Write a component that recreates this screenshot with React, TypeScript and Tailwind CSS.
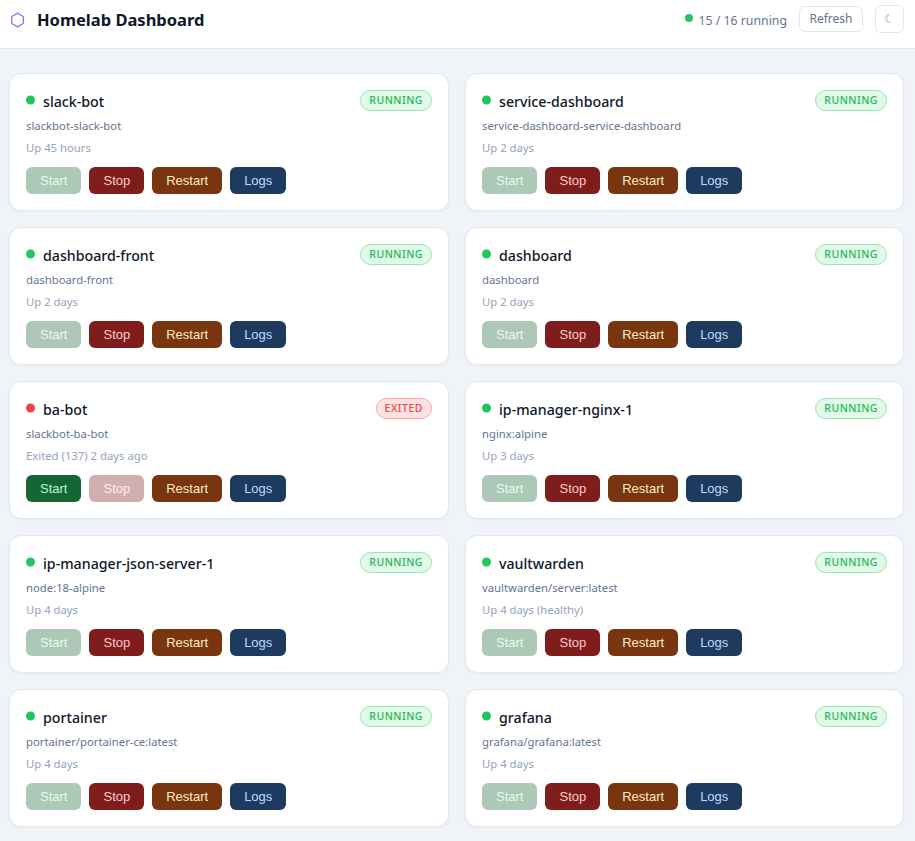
import React from 'react';

type Container = {
  name: string;
  image: string;
  status: string;
  running: boolean;
};

const containers: Container[] = [
  { name: 'slack-bot', image: 'slackbot-slack-bot', status: 'Up 45 hours', running: true },
  { name: 'service-dashboard', image: 'service-dashboard-service-dashboard', status: 'Up 2 days', running: true },
  { name: 'dashboard-front', image: 'dashboard-front', status: 'Up 2 days', running: true },
  { name: 'dashboard', image: 'dashboard', status: 'Up 2 days', running: true },
  { name: 'ba-bot', image: 'slackbot-ba-bot', status: 'Exited (137) 2 days ago', running: false },
  { name: 'ip-manager-nginx-1', image: 'nginx:alpine', status: 'Up 3 days', running: true },
  { name: 'ip-manager-json-server-1', image: 'node:18-alpine', status: 'Up 4 days', running: true },
  { name: 'vaultwarden', image: 'vaultwarden/server:latest', status: 'Up 4 days (healthy)', running: true },
  { name: 'portainer', image: 'portainer/portainer-ce:latest', status: 'Up 4 days', running: true },
  { name: 'grafana', image: 'grafana/grafana:latest', status: 'Up 4 days', running: true },
];

const btn = 'h-[27px] rounded-md px-[14px] text-[13px] leading-none font-medium font-["Liberation_Sans",sans-serif]';
const badge = 'flex h-[21px] items-center self-start rounded-full border px-2 pt-px text-[10.5px] font-medium tracking-[0.5px]';

function ContainerCard({ c }: { c: Container }) {
  return (
    <div className="flex h-[138px] flex-col rounded-xl border border-[#e2e8f0] bg-white px-4 pt-4 shadow-[0_1px_3px_rgba(0,0,0,0.04)]">
      <div className="flex h-[22px] items-center justify-between">
        <div className="flex items-center gap-2">
          <span className={`h-[9px] w-[9px] -translate-y-[0.5px] rounded-full ${c.running ? 'bg-[#22c55e]' : 'bg-[#ef4444]'}`} />
          <span className="translate-y-px text-[14.2px] font-medium text-[#0f172a]">{c.name}</span>
        </div>
        {c.running ? (
          <span className={`${badge} border-[#97e6b1] bg-[#e2f8e8] text-[#1fb855]`}>RUNNING</span>
        ) : (
          <span className={`${badge} border-[#fca5a5] bg-[#fee2e2] text-[#ef4444]`}>EXITED</span>
        )}
      </div>
      <div className="mt-[5px] text-[11.3px] leading-[18px] text-[#64748b]">{c.image}</div>
      <div className="mt-1 text-[11.3px] leading-[18px] text-[#94a3b8]">{c.status}</div>
      <div className="mt-[10px] flex gap-2">
        <button disabled={c.running} className={`${btn} bg-[#166534] text-[#bbf7d0] ${c.running ? 'opacity-35' : ''}`}>Start</button>
        <button disabled={!c.running} className={`${btn} bg-[#7f1d1d] text-[#fecaca] ${c.running ? '' : 'opacity-35'}`}>Stop</button>
        <button className={`${btn} bg-[#78350f] text-[#fdecc0]`}>Restart</button>
        <button className={`${btn} bg-[#1e3a5f] text-[#bfdbfe]`}>Logs</button>
      </div>
    </div>
  );
}

export default function App() {
  return (
    <div className="min-h-screen bg-[#f0f4f9] font-['Noto_Sans',sans-serif]">
      <header className="flex h-[49px] items-center justify-between border-b border-[#e2e8f0] bg-white pr-[11px] pl-[10px]">
        <div className="flex -translate-y-[4px] items-center gap-3">
          <svg width="15" height="16" viewBox="0 0 15 16" fill="none" stroke="#6b74f5" strokeWidth="1.2">
            <path d="M7.5 1.2 13.3 4.6v6.8L7.5 14.8 1.7 11.4V4.6Z" />
          </svg>
          <h1 className="text-[16.5px] font-bold text-[#0f172a]">Homelab Dashboard</h1>
        </div>
        <div className="flex -translate-y-[5px] items-center gap-3">
          <div className="flex items-center gap-[5px] text-[12.3px] text-[#64748b]">
            <span className="h-2 w-2 -translate-y-px rounded-full bg-[#22c55e]" />
            <span className="translate-y-[1.5px]">15 / 16 running</span>
          </div>
          <button className="h-[26px] w-[64px] rounded-md border border-[#e2e8f0] bg-white text-[12px] text-[#64748b]">Refresh</button>
          <button className="h-[28px] w-[29px] rounded-md border border-[#e2e8f0] bg-white text-[12px] text-[#94a3b8]">☾</button>
        </div>
      </header>
      <main className="grid grid-cols-[440px_439px] gap-4 pt-6 pb-[14px] pl-[9px]">
        {containers.map((c) => (
          <ContainerCard key={c.name} c={c} />
        ))}
      </main>
    </div>
  );
}
